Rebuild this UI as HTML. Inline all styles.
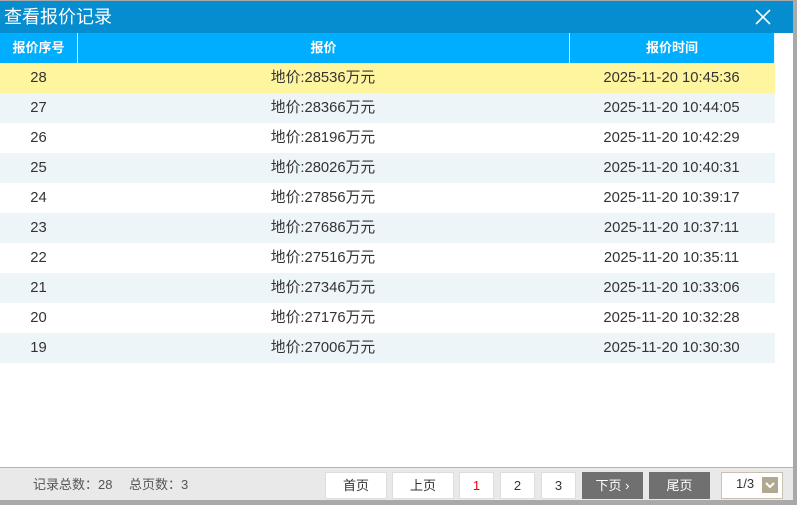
<!DOCTYPE html><html><head><meta charset="utf-8"><style>
*{margin:0;padding:0;box-sizing:border-box}
body{width:797px;height:505px;overflow:hidden;background:#a9a9a9;font-family:"Liberation Sans","Noto Sans CJK SC",sans-serif;position:relative}
.win{position:absolute;left:0;top:1px;width:793px;height:499px;background:#fff}
.title{height:32px;background:#058dcf;color:#fff;font-size:18px;line-height:32px;padding-left:4px;position:relative}
.x{position:absolute;left:755px;top:8px;width:16px;height:16px}
.hd{position:absolute;top:32px;left:0;width:775px;height:30px;background:#00aeff;color:#fff;font-weight:bold;font-size:13px}
.hd div,.r div{position:absolute;top:0;height:30px;line-height:30px;text-align:center}
.c1{left:0;width:77px}.c2{left:77px;width:492px}.c3{left:569px;width:205px}
.hd .c2,.hd .c3{border-left:1px solid #e6f6ff}
.hd .c4{left:774px;width:1px;background:#e6f6ff}
.r{position:absolute;left:0;width:775px;height:30px;font-size:14.8px;color:#333}
.r.y{background:#fff59f}
.ft{position:absolute;left:0;top:466px;width:793px;height:33px;background:#e9e9e9;border-top:1px solid #beb29e;font-size:13px;color:#555}
.b{position:absolute;top:4px;height:27px;background:#fff;border:1px solid #ddd;text-align:center;line-height:25px;color:#333}
.d{background:#707070;color:#fff;border-color:#707070}
</style></head><body><div class="win">
<div class="title">查看报价记录<svg class="x" viewBox="0 0 16 16"><path d="M1 1L15 15M15 1L1 15" stroke="#fff" stroke-width="1.6"/></svg></div>
<div class="hd"><div class="c1">报价序号</div><div class="c2">报价</div><div class="c3">报价时间</div><div class="c4"></div></div>
<div style="position:absolute;top:62px;left:0">
<div class="r y" style="top:0"><div class="c1">28</div><div class="c2">地价:28536万元</div><div class="c3">2025-11-20 10:45:36</div></div>
<div class="r" style="top:30px;background:#eef5f9"><div class="c1">27</div><div class="c2">地价:28366万元</div><div class="c3">2025-11-20 10:44:05</div></div>
<div class="r" style="top:60px;background:#fff"><div class="c1">26</div><div class="c2">地价:28196万元</div><div class="c3">2025-11-20 10:42:29</div></div>
<div class="r" style="top:90px;background:#eef5f9"><div class="c1">25</div><div class="c2">地价:28026万元</div><div class="c3">2025-11-20 10:40:31</div></div>
<div class="r" style="top:120px;background:#fff"><div class="c1">24</div><div class="c2">地价:27856万元</div><div class="c3">2025-11-20 10:39:17</div></div>
<div class="r" style="top:150px;background:#eef5f9"><div class="c1">23</div><div class="c2">地价:27686万元</div><div class="c3">2025-11-20 10:37:11</div></div>
<div class="r" style="top:180px;background:#fff"><div class="c1">22</div><div class="c2">地价:27516万元</div><div class="c3">2025-11-20 10:35:11</div></div>
<div class="r" style="top:210px;background:#eef5f9"><div class="c1">21</div><div class="c2">地价:27346万元</div><div class="c3">2025-11-20 10:33:06</div></div>
<div class="r" style="top:240px;background:#fff"><div class="c1">20</div><div class="c2">地价:27176万元</div><div class="c3">2025-11-20 10:32:28</div></div>
<div class="r" style="top:270px;background:#eef5f9"><div class="c1">19</div><div class="c2">地价:27006万元</div><div class="c3">2025-11-20 10:30:30</div></div>
</div>
<div class="ft">
<span style="position:absolute;left:33px;top:9px;line-height:15px">记录总数：28</span>
<span style="position:absolute;left:129px;top:9px;line-height:15px">总页数：3</span>
<div class="b" style="left:325px;width:62px">首页</div>
<div class="b" style="left:392px;width:62px">上页</div>
<div class="b" style="left:459px;width:35px;color:#e00">1</div>
<div class="b" style="left:500px;width:35px">2</div>
<div class="b" style="left:541px;width:35px">3</div>
<div class="b d" style="left:582px;width:61px">下页 ›</div>
<div class="b d" style="left:649px;width:61px">尾页</div>
<div class="b" style="left:721px;width:62px;border-color:#c9c0b0;text-align:left;padding-left:14px;line-height:22px">1/3<svg style="position:absolute;right:4px;top:4px" width="16" height="16" viewBox="0 0 16 16"><rect width="16" height="16" fill="#b0a890"/><path d="M4 6L8 10L12 6" stroke="#fff" stroke-width="2" fill="none"/></svg></div>
</div>
</div></body></html>
